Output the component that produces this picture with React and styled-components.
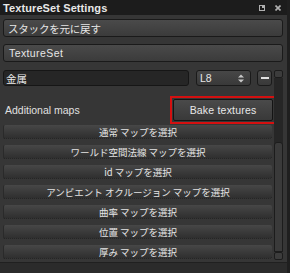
import React from 'react'
import styled, {createGlobalStyle} from 'styled-components'

const GlobalStyle = createGlobalStyle`
  body{
    margin: 0;
    background: #2a2a2a;
  }
  *{
    box-sizing: border-box;
  }
`

const maps = [
  '通常 マップを選択',
  'ワールド空間法線 マップを選択',
  'id マップを選択',
  'アンビエント オクルージョン マップを選択',
  '曲率 マップを選択',
  '位置 マップを選択',
  '厚み マップを選択',
]

const App = () => {
  return (
    <>
      <GlobalStyle />
      <Panel>
        <Header>
          <Title>TextureSet Settings</Title>
          <HeaderIcons>
            <svg width="6" height="6" viewBox="0 0 6 6">
              <rect x="0.5" y="0.5" width="5" height="5" fill="none" stroke="#b0b0b0" />
              <rect x="3" y="0" width="3" height="3" fill="#b0b0b0" />
            </svg>
            <svg width="6" height="6" viewBox="0 0 6 6">
              <path d="M0.5 0.5 L5.5 5.5 M5.5 0.5 L0.5 5.5" stroke="#b0b0b0" strokeWidth="1.6" />
            </svg>
          </HeaderIcons>
        </Header>
        <Body>
          <WideButton $jp>スタックを元に戻す</WideButton>
          <WideButton>TextureSet</WideButton>
          <Scroller>
            <Content>
              <MaterialRow>
                <Field>金属</Field>
                <Select>
                  L8
                  <svg width="6" height="9" viewBox="0 0 6 9">
                    <path d="M0 3.5 L3 0.5 L6 3.5 Z M0 5.5 L3 8.5 L6 5.5 Z" fill="#c8c8c8" />
                  </svg>
                </Select>
                <MinusButton><span /></MinusButton>
              </MaterialRow>
              <MapsHead>
                <Label>Additional maps</Label>
                <Highlight>
                  <BakeButton>Bake textures</BakeButton>
                </Highlight>
              </MapsHead>
              <MapList>
                {maps.map((m) => (
                  <MapRow key={m}>{m}</MapRow>
                ))}
              </MapList>
            </Content>
            <ScrollBar>
              <ScrollCap />
              <Track>
                <Thumb />
              </Track>
              <ScrollCap />
            </ScrollBar>
          </Scroller>
        </Body>
        <Footer />
      </Panel>
    </>
  )
}

const Panel = styled.div`
  width: 290px;
  height: 273px;
  display: flex;
  flex-direction: column;
  background: #363636;
  border-right: 3px solid #1f1f1f;
  font-family: "Liberation Sans", "Noto Sans CJK JP", sans-serif;
  color: #e0e0e0;
`

const Header = styled.div`
  height: 15px;
  flex: none;
  display: flex;
  align-items: center;
  justify-content: space-between;
  padding: 0 4px 0 3px;
  background: #1c1c1c;
`

const Title = styled.div`
  font-size: 11px;
  font-weight: bold;
  color: #e8e8e8;
  letter-spacing: 0.1px;
`

const HeaderIcons = styled.div`
  display: flex;
  gap: 10px;
  align-items: center;
  padding-right: 2px;
`

const Body = styled.div`
  display: flex;
  flex-direction: column;
  padding: 4px 4px 0 3px;
`

const WideButton = styled.div`
  height: 18px;
  margin-bottom: 7px;
  display: flex;
  align-items: center;
  padding-left: ${(p) => (p.$jp ? '4px' : '5px')};
  border: 1px solid #1a1a1a;
  border-radius: 3px;
  background: linear-gradient(#4a4a4a, #3b3b3b);
  font-size: ${(p) => (p.$jp ? '10.5px' : '10.5px')};
  letter-spacing: ${(p) => (p.$jp ? '-0.2px' : '0.4px')};
  font-family: ${(p) => (p.$jp ? '"Noto Sans CJK JP", sans-serif' : '"Liberation Sans", sans-serif')};
  color: #e6e6e6;
`

const Scroller = styled.div`
  display: flex;
  gap: 2px;
  height: 190px;
  margin-top: 1px;
`

const Content = styled.div`
  width: 270px;
  display: flex;
  flex-direction: column;
`

const MaterialRow = styled.div`
  display: flex;
  height: 16px;
  gap: 7px;
`

const Field = styled.div`
  width: 186px;
  display: flex;
  align-items: center;
  padding-left: 2px;
  background: #262626;
  border: 1px solid #161616;
  border-radius: 3px;
  font-family: "Noto Sans CJK JP", sans-serif;
  font-size: 10.5px;
  color: #ececec;
`

const Select = styled.div`
  width: 55px;
  display: flex;
  align-items: center;
  justify-content: space-between;
  padding: 0 6px 0 3px;
  background: linear-gradient(#474747, #393939);
  border: 1px solid #1a1a1a;
  border-radius: 3px;
  font-size: 10.5px;
  color: #e6e6e6;
`

const MinusButton = styled.div`
  width: 15px;
  margin-left: -1px;
  display: flex;
  align-items: center;
  justify-content: center;
  background: linear-gradient(#474747, #393939);
  border: 1px solid #1a1a1a;
  border-radius: 3px;

  span{
    width: 8px;
    height: 2px;
    background: #e0e0e0;
  }
`

const MapsHead = styled.div`
  height: 28px;
  margin-top: 10px;
  display: flex;
  align-items: center;
  justify-content: space-between;
  padding: 0 0 0 2px;
`

const Label = styled.div`
  font-size: 10.5px;
  color: #e0e0e0;
  margin-top: -1px;
`

const Highlight = styled.div`
  padding: 1px;
  margin-right: -4px;
  border: 2px solid #d41010;
`

const BakeButton = styled.div`
  width: 100px;
  height: 22px;
  display: flex;
  align-items: center;
  justify-content: center;
  background: linear-gradient(#4a4a4a, #393939);
  border: 1px solid #141414;
  border-radius: 2px;
  font-size: 10.5px;
  letter-spacing: 0.2px;
  color: #e8e8e8;
`

const MapList = styled.div`
  display: flex;
  flex-direction: column;
  gap: 6px;
  margin-top: 1px;
`

const MapRow = styled.div`
  height: 14px;
  display: flex;
  align-items: center;
  justify-content: center;
  background: linear-gradient(#474747, #2f2f2f);
  border-bottom: 1px dotted #141414;
  border-left: 1px solid #2a2a2a;
  border-radius: 2px;
  font-family: "Noto Sans CJK JP", sans-serif;
  font-size: 9.5px;
  color: #e4e4e4;
`

const ScrollBar = styled.div`
  width: 9px;
  display: flex;
  flex-direction: column;
`

const ScrollCap = styled.div`
  height: 8px;
  flex: none;
  background: #3c3c3c;
  border: 1px solid #1c1c1c;
  border-radius: 2px;
`

const Track = styled.div`
  flex: 1;
  display: flex;
  flex-direction: column;
  padding-top: 64px;
  background: #262626;
`

const Thumb = styled.div`
  flex: 1;
  background: #3a3a3a;
  border: 1px solid #1c1c1c;
  border-radius: 3px 3px 0 0;
`

const Footer = styled.div`
  flex: 1;
  margin-top: 2px;
  background: #2b2b2b;
  border-top: 1px solid #202020;
`

export default App
